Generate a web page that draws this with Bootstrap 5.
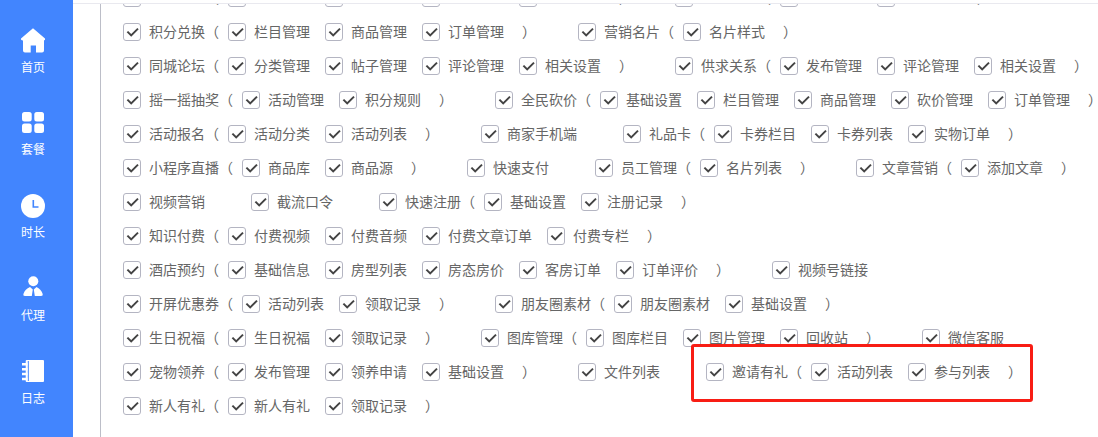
<!DOCTYPE html>
<html lang="zh-CN">
<head>
    <meta charset="UTF-8">
    <meta name="viewport" content="width=device-width, initial-scale=1.0">
    <title>权限设置</title>
    <link href="https://cdn.jsdelivr.net/npm/bootstrap@5.3.0/dist/css/bootstrap.min.css" rel="stylesheet">
    <style>
        body {
            font-family: "Liberation Sans", "Noto Sans CJK SC", sans-serif;
            font-size: 14px;
            color: #666;
            background: #fff;
        }
        .side-bar {
            width: 73px;
            background: #4285fe;
            padding-top: 27px;
            gap: 36.25px;
            color: #fff;
            font-size: 12px;
            line-height: 12px;
        }
        .side-item {
            width: 66px;
            height: 46.5px;
            gap: 8.5px;
        }
        .side-icon {
            width: 26px;
            height: 26px;
        }
        .main-panel {
            border-top: 1px solid #e9e9ef;
            margin-top: 3px;
        }
        .perm-box {
            display: flow-root;
            margin-left: 27px;
            border-left: 1px solid #bcbec8;
            padding-left: 22px;
        }
        .perm-list {
            margin-top: -23px;
        }
        .perm-row {
            height: 34px;
            white-space: nowrap;
        }
        .perm-row .form-check-input {
            flex: none;
            width: 18px;
            height: 18px;
            margin: 0 8px 0 0;
            border: 1px solid #b4b5c2;
            border-radius: 3px;
            background-color: #fff;
            background-size: 16px 16px;
            background-image: url("data:image/svg+xml,%3csvg xmlns='http://www.w3.org/2000/svg' viewBox='0 0 16 16'%3e%3cpath fill='none' stroke='%23444' stroke-width='2' d='M3.4 7.6l3.8 3.8 6.8-6.8'/%3e%3c/svg%3e");
        }
        .perm-child { margin-right: 15px; }
        .perm-single { margin-right: 46px; }
        .paren-open { width: 14px; margin-right: 9px; }
        .paren-close { width: 17px; padding-left: 3px; margin-right: 42px; }
        .red-box {
            position: absolute;
            left: 618px;
            top: 340px;
            width: 342px;
            height: 58px;
            border: 3px solid #f81d14;
            border-radius: 3px;
        }
    </style>
</head>
<body>
    <div class="d-flex vh-100 overflow-hidden">
        <nav class="side-bar d-flex flex-column flex-shrink-0">
            <div class="side-item d-flex flex-column align-items-center">
                <svg class="side-icon" viewBox="-1 -1 26 26"><path fill="#fff" d="M12 .2 24 10.6Q24.6 12.4 23 12.4V22.5a2 2 0 0 1-2 2H15V17.5H9.7V24.5H4a2 2 0 0 1-2-2V12.4Q-.6 12.4 0 10.6Z"/></svg>
                <span>首页</span>
            </div>
            <div class="side-item d-flex flex-column align-items-center">
                <svg class="side-icon" viewBox="-2 -2 26 26"><g fill="#fff"><rect width="9.7" height="9.5" rx="2.5"/><rect x="12.3" width="9.7" height="9.5" rx="2.5"/><rect y="11.5" width="9.7" height="9.5" rx="2.5"/><rect x="12.3" y="11.5" width="9.7" height="9.5" rx="2.5"/></g></svg>
                <span>套餐</span>
            </div>
            <div class="side-item d-flex flex-column align-items-center">
                <svg class="side-icon" viewBox="-1 -1 26 26"><circle cx="12" cy="12" r="12" fill="#fff"/><path fill="none" stroke="#4285fe" stroke-width="1.6" d="M12.3 6V13H17.5"/></svg>
                <span>时长</span>
            </div>
            <div class="side-item d-flex flex-column align-items-center">
                <svg class="side-icon" viewBox="-3.5 -1 26 26"><circle cx="9.8" cy="5.2" r="5" fill="#fff"/><path fill="#fff" d="M6.5 11 9.3 13.5 8.3 20H1.5Q-.8 20 .1 17.5 1.5 13 6.5 11ZM13 11 10.3 13.5 11.3 20H17.5Q19.8 20 19 17.5 17.5 13 13 11Z"/></svg>
                <span>代理</span>
            </div>
            <div class="side-item d-flex flex-column align-items-center">
                <svg class="side-icon" viewBox="-2 -2 26 26"><rect x="3.7" width="18.3" height="22" rx="1" fill="#fff"/><path stroke="#4285fe" d="M6.3 1V21"/><path stroke="#fff" stroke-width="2.4" d="M0 4.2H5.5M0 9.2H5.5M0 14H5.5M0 19H5.5"/></svg>
                <span>日志</span>
            </div>
        </nav>

        <div class="main-panel flex-grow-1 position-relative overflow-hidden">
            <div class="perm-box h-100">
                <div class="perm-list" id="permList"></div>
            </div>
            <div class="red-box"></div>
        </div>
    </div>

    <script src="https://cdn.jsdelivr.net/npm/bootstrap@5.3.0/dist/js/bootstrap.bundle.min.js"></script>
    <script>
        // first row is scrolled out of view, only the bottom of its boxes shows
        const blank = '\u3000\u3000\u3000\u3000';
        const rows = [
            [[blank, [blank, blank, blank, blank]], [blank, [blank, blank]]],
            [['积分兑换', ['栏目管理', '商品管理', '订单管理']], ['营销名片', ['名片样式']]],
            [['同城论坛', ['分类管理', '帖子管理', '评论管理', '相关设置']], ['供求关系', ['发布管理', '评论管理', '相关设置']]],
            [['摇一摇抽奖', ['活动管理', '积分规则']], ['全民砍价', ['基础设置', '栏目管理', '商品管理', '砍价管理', '订单管理']]],
            [['活动报名', ['活动分类', '活动列表']], ['商家手机端'], ['礼品卡', ['卡券栏目', '卡券列表', '实物订单']]],
            [['小程序直播', ['商品库', '商品源']], ['快速支付'], ['员工管理', ['名片列表']], ['文章营销', ['添加文章']]],
            [['视频营销'], ['截流口令'], ['快速注册', ['基础设置', '注册记录']]],
            [['知识付费', ['付费视频', '付费音频', '付费文章订单', '付费专栏']]],
            [['酒店预约', ['基础信息', '房型列表', '房态房价', '客房订单', '订单评价']], ['视频号链接']],
            [['开屏优惠券', ['活动列表', '领取记录']], ['朋友圈素材', ['朋友圈素材', '基础设置']]],
            [['生日祝福', ['生日祝福', '领取记录']], ['图库管理', ['图库栏目', '图片管理', '回收站']], ['微信客服']],
            [['宠物领养', ['发布管理', '领养申请', '基础设置']], ['文件列表'], ['邀请有礼', ['活动列表', '参与列表']]],
            [['新人有礼', ['新人有礼', '领取记录']]]
        ];

        const box = '<input class="form-check-input" type="checkbox" checked>';

        function renderGroup([name, children]) {
            if (!children) {
                return `${box}<span class="perm-single">${name}</span>`;
            }
            return `${box}<span>${name}</span><span class="paren-open">（</span>`
                + children.map(c => `${box}<span class="perm-child">${c}</span>`).join('')
                + '<span class="paren-close">）</span>';
        }

        document.getElementById('permList').innerHTML = rows.map(row =>
            `<div class="perm-row d-flex align-items-center">${row.map(renderGroup).join('')}</div>`
        ).join('');
    </script>
</body>
</html>
